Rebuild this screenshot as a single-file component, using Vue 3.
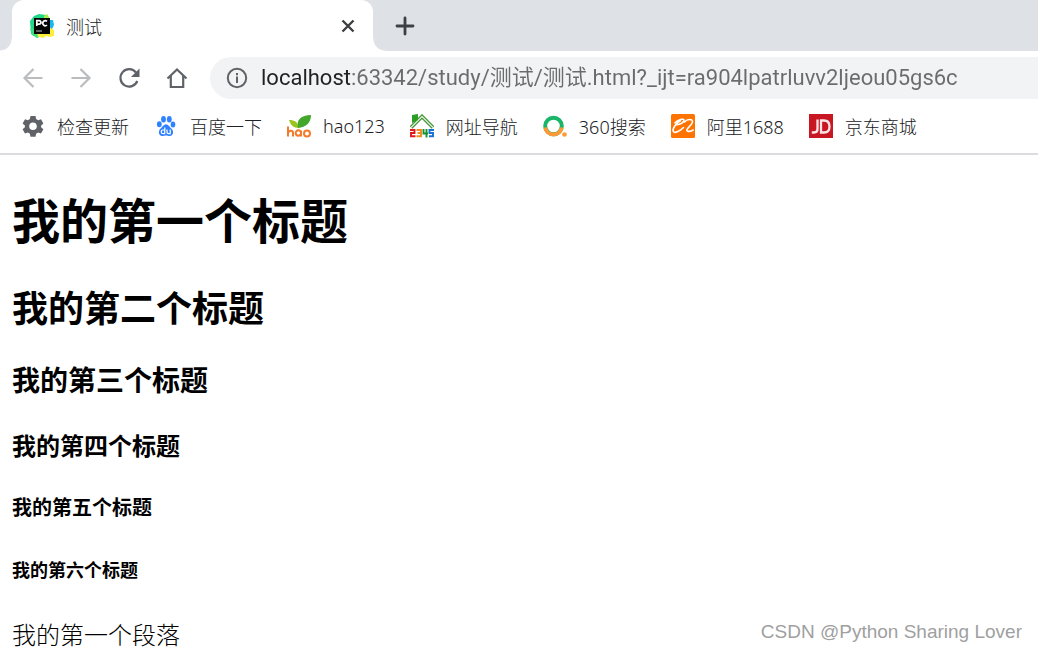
<script setup>
import { ref } from 'vue'

const address = ref('localhost:63342/study/测试/测试.html?_ijt=ra904lpatrluvv2ljeou05gs6c')
</script>

<template>
  <div class="browser">
    <div class="tab-strip">
      <div class="tab">
        <svg class="icon" viewBox="0 0 24 24" aria-hidden="true">
          <path d="M0 7 4 2l5-2 7 1 2 5-2 14-9 4-6-4z" fill="#21d789" />
          <path d="m18 6 5 0 1 5-2 4-4 1z" fill="#16b8f0" />
          <path d="m14 2 3-2 2 3 1 4-6-2z" fill="#a5ec45" />
          <path d="M6 18h12v-6l4 3 2 1v6l-4 1-4-1-3 2-7-2z" fill="#fcf03a" />
          <path d="M0 15h5l3 7-5 0z" fill="#3fe07c" />
          <path d="M4 4h16v16H4z" fill="#050505" />
          <path d="M6.800 12V6.600h2.300a1.700 1.700 0 0 1 0 3.500H7M17 7.400a2.500 2.500 0 1 0 0 3.600" fill="none" stroke="#fff" stroke-width="1.700" />
          <path d="M6 17h6" stroke="#bbb" stroke-width="1" />
        </svg>
        <span class="tab-title">测试</span>
        <button class="close" type="button" aria-label="关闭标签页">
          <svg viewBox="0 0 24 24"><path d="m6.500 6.500 11 11m0-11-11 11" fill="none" stroke="#3c4043" stroke-width="2.400" /></svg>
        </button>
      </div>
      <button class="new-tab" type="button" aria-label="新标签页">
        <svg viewBox="0 0 24 24"><path d="M12 4v16M4 12h16" fill="none" stroke="#3c4043" stroke-width="2.800" stroke-linecap="round" /></svg>
      </button>
    </div>

    <div class="toolbar">
      <button type="button" aria-label="后退">
        <svg class="faded" viewBox="0 0 24 24"><path d="M21.500 12H3.500M12.500 3l-9 9 9 9" /></svg>
      </button>
      <button type="button" aria-label="前进">
        <svg class="faded" viewBox="0 0 24 24"><path d="M2.500 12h18M11.500 3l9 9-9 9" /></svg>
      </button>
      <button type="button" aria-label="重新加载">
        <svg viewBox="0 0 24 24"><path d="M19 6.500A8.700 8.700 0 1 0 20.300 15" /><path class="solid" d="M22.500 2.500v8.500H14z" /></svg>
      </button>
      <button type="button" aria-label="主页">
        <svg viewBox="0 0 24 24"><path d="M2.500 12.500 12 3.500l9.500 9M5.800 10v11h12.400V10" /></svg>
      </button>
      <div class="omnibox">
        <svg class="info" viewBox="0 0 24 24" aria-hidden="true"><circle cx="12" cy="12" r="9.200" /><path d="M12 10.500V17M12 7v2.200" /></svg>
        <input v-model="address" type="text" aria-label="地址栏" spellcheck="false" />
      </div>
    </div>

    <nav class="bookmarks">
      <a href="#">
        <svg class="icon" viewBox="0 0 24 24" aria-hidden="true">
          <path d="m9.500 2h5l.6 3 2 1.200 2.900-1 2.400 4.200-2.300 2v1.900l2.300 2-2.400 4.200-2.900-1-2 1.200-.6 3h-5l-.6-3-2-1.200-2.900 1-2.400-4.200 2.300-2v-1.900l-2.300-2L4 5.200l2.900 1 2-1.200zM12 8.500a3.800 3.800 0 1 0 0 7.600 3.800 3.800 0 0 0 0-7.600z" fill="#5f6368" />
        </svg>
        检查更新
      </a>
      <a href="#">
        <svg class="icon" viewBox="0 0 24 24" aria-hidden="true">
          <g fill="#2e82ff">
            <ellipse cx="5.300" cy="10.300" rx="2.400" ry="3" /><ellipse cx="9.500" cy="5.200" rx="2.400" ry="3.200" />
            <ellipse cx="15.300" cy="5.200" rx="2.400" ry="3.200" /><ellipse cx="19" cy="10.500" rx="2.300" ry="3" />
            <path d="M12 10.300c2.300 0 3.300 2.600 5.300 4.200 3 2.600 2 7.500-1.600 7.500-1.700 0-2.300-.5-3.700-.5s-2 .5-3.700.5c-3.600 0-4.600-4.900-1.600-7.500 2-1.600 3-4.200 5.300-4.200z" />
          </g>
          <path d="M10.800 13.500v6.300M10.800 16H9a1.700 1.700 0 0 0 0 3.700h1.800M13 15.500v2.800q0 1.400 1.400 1.400h1.800v-4.200" fill="none" stroke="#fff" stroke-width="1.200" />
        </svg>
        百度一下
      </a>
      <a href="#">
        <svg class="icon" viewBox="0 0 24 24" aria-hidden="true">
          <path d="M2 6c6 0 9 2 9.500 8C6.500 14 3.500 11 2 6z" fill="#9ac51c" />
          <path d="M24 1C14 1 9 6 11 14c8-1 13-5 13-13z" fill="#43a72b" />
          <path d="M1 12.500v10m0-3.500c1-3 5-3 5 0v3.500M14 16.500v6m0-3a2.700 2.700 0 1 0-5.300 0 2.700 2.700 0 0 0 5.300 0zm9 0a3 3 0 1 0-6 0 3 3 0 0 0 6 0z" fill="none" stroke="#f47b2b" stroke-width="2" />
        </svg>
        hao123
      </a>
      <a href="#">
        <svg class="icon" viewBox="0 0 24 24" aria-hidden="true">
          <path d="M1 13.500 12 2.500l11 11" fill="none" stroke="#388c2d" stroke-width="3.600" />
          <path d="M1 13.500 12 2.500l11 11" fill="none" stroke="#dcefd7" stroke-width="1.400" />
          <path d="M2 1 8 0v6L2 9z" fill="#2c9d27" />
          <g fill="none" stroke-width="1.900">
            <path d="M0 16h4.500v3H1v3.200h4.500" stroke="#e01818" />
            <path d="M6.500 16H11v6.200H6.500m1-3.200H11" stroke="#f28a22" />
            <path d="M13.500 15v4.500H18M16.500 15v8.500" stroke="#14932a" />
            <path d="M24 16h-4.500v3H23v3.200h-4" stroke="#1672ce" />
          </g>
        </svg>
        网址导航
      </a>
      <a href="#">
        <svg class="icon" viewBox="0 0 24 24" aria-hidden="true">
          <circle cx="10.500" cy="12" r="8.300" fill="none" stroke="#19b568" stroke-width="4" />
          <path d="M2.300 13.500a8.300 8.300 0 0 0 16.400 0" fill="none" stroke="#fe9935" stroke-width="4" />
          <circle cx="21.500" cy="20.500" r="2.300" fill="#fe9935" />
        </svg>
        360搜索
      </a>
      <a href="#">
        <svg class="icon" viewBox="0 0 24 24" aria-hidden="true">
          <rect width="24" height="24" rx="1.500" fill="#ff7300" />
          <path d="M4 9C6.500 5.500 13 4 13 6.300c0 2.200-4 4.200-7 4.400M9.500 6.800C5 9 1.200 14.800 2.200 17.300c1 2.400 6.500.2 10.300-3.800M13.500 8c2.500-3 8.500-3.500 8 0-.4 3-4.500 5-5.500 7.500-.9 2.400 3 2.500 6.200.5" fill="none" stroke="#fff" stroke-width="1.600" stroke-linecap="round" />
        </svg>
        阿里1688
      </a>
      <a href="#">
        <svg class="icon" viewBox="0 0 24 24" aria-hidden="true">
          <path d="M0 0h24v24H0z" fill="#c91623" />
          <path d="M8.500 5.500v9.500q0 3.500-3.500 3.500H2.800M12 6.500v12h3q5.500 0 5.500-6t-5.500-6z" fill="none" stroke="#fbe6e7" stroke-width="2.300" />
        </svg>
        京东商城
      </a>
    </nav>

    <main class="page">
      <h1>我的第一个标题</h1>
      <h2>我的第二个标题</h2>
      <h3>我的第三个标题</h3>
      <h4>我的第四个标题</h4>
      <h5>我的第五个标题</h5>
      <h6>我的第六个标题</h6>
      <p>我的第一个段落</p>
      <div class="watermark">CSDN @Python Sharing Lover</div>
    </main>
  </div>
</template>

<style>
body {
  margin: 0;
  background: #fff;
}
</style>

<style scoped>
.browser {
  display: flex;
  flex-direction: column;
  min-height: 100vh;
  font-family: "Noto Sans", "Noto Sans CJK SC", sans-serif;
  overflow: hidden;
}

button {
  display: flex;
  flex: none;
  padding: 0;
  border: 0;
  background: none;
}

button svg,
.icon,
.info {
  display: block;
  flex: none;
  width: 24px;
  height: 24px;
}

.tab-strip {
  display: flex;
  align-items: center;
  height: 51px;
  padding-left: 12px;
  background: #dee1e6;
}

.tab {
  position: relative;
  display: flex;
  align-items: center;
  gap: 12px;
  box-sizing: border-box;
  flex: 0 1 361px;
  height: 100%;
  padding: 0 13px 0 18px;
  border-radius: 12px 12px 0 0;
  background: #fff;
}

.tab::before,
.tab::after {
  content: "";
  position: absolute;
  bottom: 0;
  width: 12px;
  height: 12px;
}

.tab::before {
  right: 100%;
  background: radial-gradient(circle at 0 0, transparent 11px, #fff 12px);
}

.tab::after {
  left: 100%;
  background: radial-gradient(circle at 100% 0, transparent 11px, #fff 12px);
}

.tab-title {
  flex: 1;
  font-size: 18px;
  font-weight: 300;
  color: #202124;
}

.new-tab {
  margin-left: 20px;
}

.toolbar {
  display: flex;
  align-items: center;
  gap: 24px;
  height: 54px;
  padding-left: 21px;
}

.toolbar svg {
  fill: none;
  stroke: #5f6368;
  stroke-width: 2.2;
}

.toolbar .faded {
  stroke: #babcbe;
}

.toolbar .solid {
  fill: #5f6368;
  stroke: none;
}

.omnibox {
  display: flex;
  flex: 1;
  align-items: center;
  gap: 12px;
  height: 42px;
  margin-left: -3px;
  padding-left: 15px;
  border-radius: 21px 0 0 21px;
  background: #f1f3f4;
}

.omnibox .info {
  stroke-width: 2;
}

.omnibox input {
  flex: 1;
  min-width: 0;
  padding: 0;
  border: 0;
  outline: 0;
  font-family: Roboto, "Noto Sans CJK SC", sans-serif;
  font-size: 22px;
  line-height: 32px;
  color: transparent;
  background: linear-gradient(to right, #202124 91px, #696b6e 91px);
  -webkit-background-clip: text;
  background-clip: text;
}

.bookmarks {
  display: flex;
  align-items: center;
  gap: 25px;
  height: 48px;
  padding: 0 21px;
  border-bottom: 2px solid #dadce0;
}

.bookmarks a {
  display: flex;
  align-items: center;
  gap: 12px;
  height: 42px;
  padding-bottom: 6px;
  font-size: 18px;
  font-weight: 300;
  color: #202124;
  text-decoration: none;
  white-space: nowrap;
}

.page {
  position: relative;
  flex: 1;
  padding: 31px 12px 0;
  font-family: "Noto Sans CJK SC", sans-serif;
  color: #000;
}

h1 {
  margin: 0 0 32px;
  font-size: 48px;
  line-height: 64px;
}

h2 {
  margin: 0 0 30px;
  font-size: 36px;
  line-height: 48px;
}

h3 {
  margin: 0 0 31px;
  font-size: 28px;
  line-height: 38px;
}

h4 {
  margin: 0 0 32px;
  font-size: 24px;
  line-height: 32px;
}

h5 {
  margin: 0 0 36px;
  font-size: 20px;
  line-height: 28px;
}

h6 {
  margin: 0 0 37px;
  font-size: 18px;
  line-height: 24px;
}

p {
  margin: 0;
  font-size: 24px;
  font-weight: 300;
  line-height: 32px;
}

.watermark {
  position: absolute;
  right: 16px;
  bottom: 8px;
  font-family: "Liberation Sans", Arial, sans-serif;
  font-size: 19px;
  line-height: 24px;
  color: #a0a0a0;
}
</style>
